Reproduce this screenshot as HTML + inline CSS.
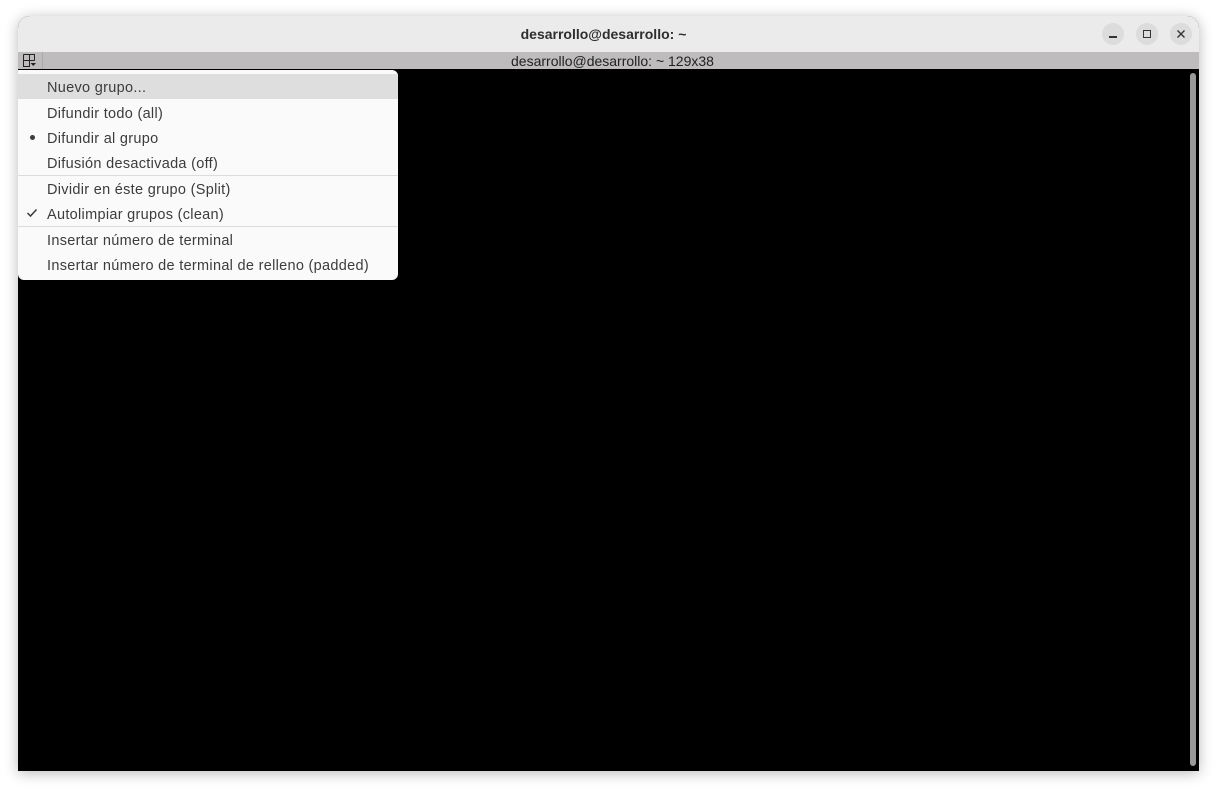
<!DOCTYPE html>
<html><head><style>
body{margin:0;width:1214px;height:791px;background:#fff;position:relative;overflow:hidden;font-family:"Liberation Sans",sans-serif}
.win{position:absolute;left:18px;top:16px;width:1181px;height:755px;border-radius:12px 12px 0 0;box-shadow:0 2px 14px rgba(0,0,0,.28);background:#000;overflow:hidden}
.title{position:absolute;left:0;top:0;width:100%;height:36px;background:#ebebeb;text-align:center;line-height:36px;font-size:14px;font-weight:bold;color:#2e2e2e;padding-right:10px;box-sizing:border-box}
.btn{position:absolute;top:7px;width:22px;height:22px;border-radius:50%;background:#dcdcdc}
.tab{position:absolute;left:0;top:36px;width:100%;height:17px;background:#bebcbc;text-align:center;font-size:14px;line-height:19px;color:#222;padding-left:8px;box-sizing:border-box}
.menu{position:absolute;left:18px;top:70px;width:380px;height:210px;background:#fafafa;border-radius:0 6px 6px 6px;font-size:14.5px;color:#3c3c3c;letter-spacing:0.3px}
.it{position:absolute;left:0;width:380px;height:25px;line-height:28px;padding-left:29px;box-sizing:border-box}
.sep{position:absolute;left:0;width:380px;height:1px;background:#dcdcdc}
.sb{position:absolute;left:1172px;top:57px;width:6px;height:693px;background:#9a9a9a;border-radius:3px}
</style></head><body>
<div class="win">
 <div class="title">desarrollo@desarrollo: ~</div>
 <div class="btn" style="left:1084px"><div style="position:absolute;left:7px;top:13px;width:8px;height:1.5px;background:#333"></div></div>
 <div class="btn" style="left:1118px"><div style="position:absolute;left:7px;top:7px;width:6px;height:6px;border:1.3px solid #333"></div></div>
 <div class="btn" style="left:1152px"><svg width="22" height="22" style="position:absolute;left:0;top:0"><path d="M7.5 7.5L14.5 14.5M14.5 7.5L7.5 14.5" stroke="#333" stroke-width="1.4"/></svg></div>
 <div class="tab">desarrollo@desarrollo: ~ 129x38</div>
 <div style="position:absolute;left:24px;top:36px;width:1px;height:17px;background:#aaa"></div>
 <svg style="position:absolute;left:4px;top:37px" width="16" height="15"><path d="M1.5 1.5H12.5V7.5M1.5 1.5V13.5H7.5V1.5M1.5 7.5H12.5" stroke="#222" fill="none" stroke-width="1"/><path d="M8.5 10H14L11.25 13z" fill="#222"/></svg>
 <div class="sb"></div>
</div>
<div class="menu">
 <div class="it" style="top:4px;background:#dedede">Nuevo grupo...</div>
 <div class="it" style="top:30px">Difundir todo (all)</div>
 <div class="it" style="top:55px">Difundir al grupo</div>
 <div style="position:absolute;left:12px;top:65px;width:5px;height:5px;border-radius:50%;background:#3c3c3c"></div>
 <div class="it" style="top:80px">Difusión desactivada (off)</div>
 <div class="sep" style="top:105px"></div>
 <div class="it" style="top:106px">Dividir en éste grupo (Split)</div>
 <div class="it" style="top:131px">Autolimpiar grupos (clean)</div>
 <svg style="position:absolute;left:8px;top:137px" width="12" height="12"><path d="M1.5 6L4.5 9L10.5 2.5" stroke="#3c3c3c" stroke-width="1.5" fill="none"/></svg>
 <div class="sep" style="top:156px"></div>
 <div class="it" style="top:157px">Insertar número de terminal</div>
 <div class="it" style="top:182px">Insertar número de terminal de relleno (padded)</div>
</div>
</body></html>
